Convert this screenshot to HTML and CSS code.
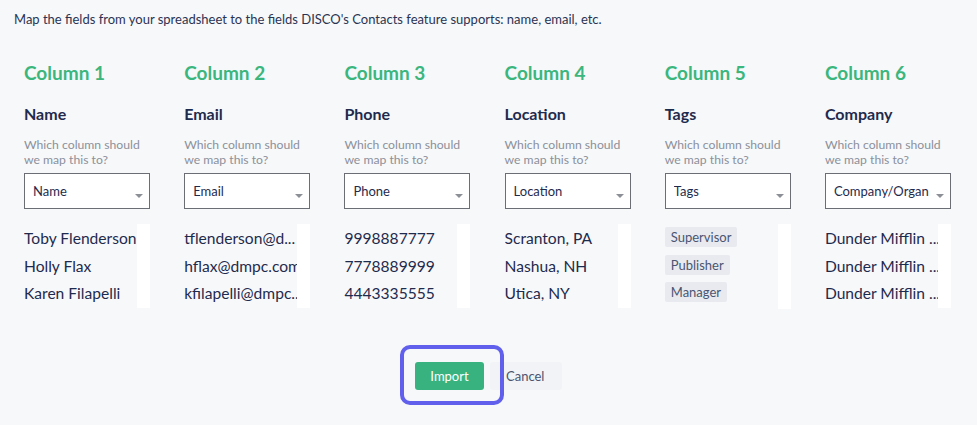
FILE: index.html
```html
<!DOCTYPE html>
<html>
<head>
<meta charset="utf-8">
<link rel="stylesheet" href="styles.css">
</head>
<body>
<div class="page">
  <p class="intro">Map the fields from your spreadsheet to the fields DISCO's Contacts feature supports: name, email, etc.</p>
  <div class="columns">
    <div class="col">
      <h2 class="col-title">Column 1</h2>
      <h3 class="field">Name</h3>
      <p class="help">Which column should we map this to?</p>
      <div class="select"><span>Name</span><i class="caret"></i></div>
      <div class="values">
        <div class="val">Toby Flenderson</div>
        <div class="val">Holly Flax</div>
        <div class="val">Karen Filapelli</div>
      </div>
    </div>
    <div class="col">
      <h2 class="col-title">Column 2</h2>
      <h3 class="field">Email</h3>
      <p class="help">Which column should we map this to?</p>
      <div class="select"><span>Email</span><i class="caret"></i></div>
      <div class="values">
        <div class="val">tflenderson@d...</div>
        <div class="val">hflax@dmpc.com</div>
        <div class="val">kfilapelli@dmpc...</div>
      </div>
    </div>
    <div class="col">
      <h2 class="col-title">Column 3</h2>
      <h3 class="field">Phone</h3>
      <p class="help">Which column should we map this to?</p>
      <div class="select"><span>Phone</span><i class="caret"></i></div>
      <div class="values">
        <div class="val">9998887777</div>
        <div class="val">7778889999</div>
        <div class="val">4443335555</div>
      </div>
    </div>
    <div class="col">
      <h2 class="col-title">Column 4</h2>
      <h3 class="field">Location</h3>
      <p class="help">Which column should we map this to?</p>
      <div class="select"><span>Location</span><i class="caret"></i></div>
      <div class="values">
        <div class="val">Scranton, PA</div>
        <div class="val">Nashua, NH</div>
        <div class="val">Utica, NY</div>
      </div>
    </div>
    <div class="col">
      <h2 class="col-title">Column 5</h2>
      <h3 class="field">Tags</h3>
      <p class="help">Which column should we map this to?</p>
      <div class="select"><span>Tags</span><i class="caret"></i></div>
      <div class="values tags">
        <div class="tagrow"><span class="tag">Supervisor</span></div>
        <div class="tagrow"><span class="tag">Publisher</span></div>
        <div class="tagrow"><span class="tag">Manager</span></div>
      </div>
    </div>
    <div class="col">
      <h2 class="col-title">Column 6</h2>
      <h3 class="field">Company</h3>
      <p class="help">Which column should we map this to?</p>
      <div class="select"><span>Company/Organ</span><i class="caret"></i></div>
      <div class="values">
        <div class="val">Dunder Mifflin ...</div>
        <div class="val">Dunder Mifflin ...</div>
        <div class="val">Dunder Mifflin ...</div>
      </div>
    </div>
  </div>
  <div class="actions">
    <button class="btn-import">Import</button>
    <button class="btn-cancel">Cancel</button>
  </div>
</div>
</body>
</html>
```
FILE: styles.css
```css
html, body {
  margin: 0;
  padding: 0;
  background: #f7f8fa;
}
body {
  font-family: Lato, "Noto Sans", sans-serif;
  color: #1f2b4d;
  width: 977px;
  height: 425px;
  overflow: hidden;
}
.page {
  padding: 11px 0 0 14px;
}
.intro {
  margin: 0;
  font-size: 13px;
  line-height: 17px;
  color: #2a3452;
}
.columns {
  display: flex;
  padding-left: 10px;
  margin-top: 34px;
}
.col {
  width: 126px;
  margin-right: 34.2px;
  flex: none;
}
.col-title {
  margin: 0;
  font-size: 19px;
  line-height: 22px;
  font-weight: 700;
  color: #3bb67d;
}
.field {
  margin: 20px 0 0;
  font-size: 16px;
  line-height: 20px;
  font-weight: 700;
  color: #1f2b4d;
}
.help {
  margin: 13px 0 0;
  font-size: 12.2px;
  line-height: 15px;
  color: #8b909b;
}
.select {
  margin-top: 6px;
  height: 34px;
  border: 1px solid #6b6e75;
  background: #fff;
  display: flex;
  align-items: center;
  justify-content: space-between;
  padding: 0 6px 0 8px;
  font-size: 13px;
  color: #1f2b4d;
  overflow: hidden;
  white-space: nowrap;
}
.select span {
  overflow: hidden;
}
.caret {
  flex: none;
  width: 0;
  height: 0;
  border-left: 4px solid transparent;
  border-right: 4px solid transparent;
  border-top: 4px solid #8c8f96;
  margin: 10px 0 0 4px;
}
.values {
  position: relative;
  margin-top: 15px;
  padding: 1px 0 0;
  white-space: nowrap;
  overflow: hidden;
}
.values::after {
  content: "";
  position: absolute;
  top: 0;
  bottom: 0;
  right: 0;
  width: 13px;
  background: #fff;
}
.val {
  font-size: 15.6px;
  line-height: 27.5px;
  color: #1f2b4d;
}
.tags {
  padding-top: 2px;
}
.tagrow {
  height: 27.5px;
}
.tag {
  display: inline-block;
  background: #e8eaef;
  border-radius: 2px;
  padding: 2px 6px;
  font-size: 13px;
  line-height: 16px;
  color: #4a5572;
}
.actions {
  display: flex;
  justify-content: center;
  margin-top: 53px;
  padding-right: 14px;
  gap: 6px;
}
.actions button {
  font-family: inherit;
  font-size: 13px;
  border: 0;
  height: 28px;
  border-radius: 3px;
  cursor: pointer;
}
.btn-import {
  position: relative;
  width: 69px;
  background: #38b37f;
  color: #fff;
}
.btn-import::after {
  content: "";
  position: absolute;
  left: -15px;
  top: -17px;
  right: -20px;
  bottom: -15px;
  border: 4px solid #6160ec;
  border-radius: 10px;
  z-index: 2;
}
.btn-cancel {
  width: 72px;
  background: #f1f3f6;
  color: #4a5572;
  text-align: left;
  padding-left: 16px;
}
```
